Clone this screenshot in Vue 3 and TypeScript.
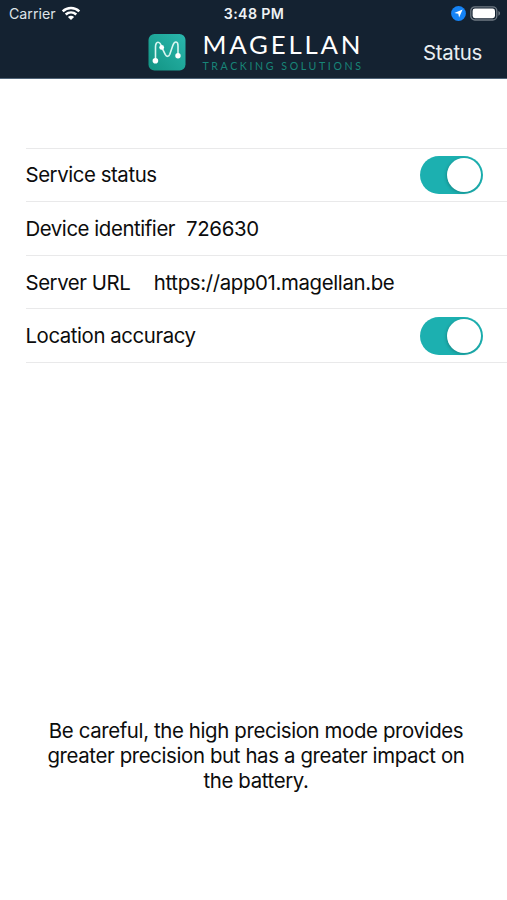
<script setup lang="ts">
interface Row {
  id: string
  label: string
  value?: string
  toggle?: boolean
}

const rows: Row[] = [
  { id: 'service', label: 'Service status', toggle: true },
  { id: 'device', label: 'Device identifier', value: '726630' },
  { id: 'server', label: 'Server URL', value: 'https://app01.magellan.be' },
  { id: 'accuracy', label: 'Location accuracy', toggle: true },
]
const notice: string[] = [
  'Be careful, the high precision mode provides',
  'greater precision but has a greater impact on',
  'the battery.',
]
</script>

<template>
  <div class="screen">
    <header class="top">
      <div class="statusbar">
        <div class="carrier">
          <span>Carrier</span>
          <svg class="wifi" width="20" height="15" viewBox="0 0 20 15">
            <path d="M1.7 5.3C6.4 .9 13.6 .9 18.3 5.3" />
            <path d="M4.7 8.5C7.8 5.7 12.2 5.7 15.3 8.5" />
            <path class="dot" d="M10 14L6.9 10.9C8.7 9.3 11.3 9.3 13.1 10.9Z" />
          </svg>
        </div>
        <div class="time">3:48 PM</div>
        <div class="indicators">
          <svg width="15" height="15" viewBox="0 0 15 15">
            <circle cx="7.5" cy="7.5" r="7.4" fill="#1583f5" />
            <path d="M11.6 3.4L8.1 11.6L7.3 7.7L3.4 6.9Z" fill="#fff" />
          </svg>
          <svg width="31" height="15" viewBox="0 0 31 15">
            <rect x=".8" y=".8" width="26" height="13.2" rx="4" fill="none" stroke="#6f7983" stroke-width="1.3" />
            <rect x="2.6" y="2.6" width="22.4" height="9.6" rx="2.4" fill="#fff" />
            <path d="M28.4 5.1C30.6 6 30.6 8.8 28.4 9.7Z" fill="#6f7983" />
          </svg>
        </div>
      </div>
      <div class="navbar">
        <div class="brand">
          <svg class="mark" width="38" height="37" viewBox="0 0 38 37">
            <defs>
              <linearGradient id="markFill" x1="0" y1="1" x2="1" y2="0">
                <stop offset="0" stop-color="#129483" />
                <stop offset="1" stop-color="#2ab7ad" />
              </linearGradient>
            </defs>
            <rect x=".5" y="0" width="37" height="36.5" rx="6" fill="url(#markFill)" />
            <path
              d="M7.5 26.7V13C7.5 6.8 12 6.6 13.8 13.4L17.2 20.4C18.6 23 20.6 23 21.8 20.2L24.8 11.5C26.6 6.6 30 7 30 12V22"
              fill="none" stroke="#d9f6f1" stroke-width="1.6" stroke-linecap="round" />
            <circle cx="7.4" cy="26.8" r="2.8" fill="#fff" />
            <circle cx="13.7" cy="13.4" r="2.4" fill="#fff" />
            <circle cx="30" cy="21.8" r="2.7" fill="#fff" />
          </svg>
          <div class="wordmark">
            <span class="name">MAGELLAN</span>
            <span class="tag">TRACKING SOLUTIONS</span>
          </div>
        </div>
        <a class="action">Status</a>
      </div>
    </header>

    <main class="list">
      <div v-for="row in rows" :key="row.id" class="row" :class="row.id">
        <span class="label">{{ row.label }}</span>
        <span v-if="row.value" class="value">{{ row.value }}</span>
        <span v-if="row.toggle" class="switch"><span class="knob"></span></span>
      </div>
    </main>

    <footer class="notice">
      <p v-for="(line, i) in notice" :key="i">{{ line }}</p>
    </footer>
  </div>
</template>

<style>
body {
  background: #fff;
}
</style>

<style scoped>
.screen {
  width: 507px;
  height: 900px;
  display: flex;
  flex-direction: column;
  overflow: hidden;
  background: #fff;
  color: #0c0c0c;
  font-family: Inter, "Liberation Sans", sans-serif;
  font-size: 20.4px;
}
.top {
  height: 79px;
  box-sizing: border-box;
  border-bottom: 1px solid #4f6376;
  background: #142231;
  color: #fff;
}
.statusbar {
  height: 27px;
  padding: 0 6px 0 9px;
  display: grid;
  grid-template-columns: 1fr auto 1fr;
  align-items: center;
  font-size: 14.2px;
}
.carrier {
  display: flex;
  align-items: center;
  gap: 5px;
  color: #dfe4e8;
}
.wifi {
  fill: none;
  stroke: #fff;
  stroke-width: 2.5;
}
.wifi .dot {
  fill: #fff;
  stroke: none;
}
.time {
  margin-right: 2px;
  font-weight: 600;
  letter-spacing: 0.35px;
  color: #eef1f4;
}
.indicators {
  display: flex;
  justify-content: flex-end;
  align-items: center;
  gap: 4px;
}
.navbar {
  height: 51px;
  padding: 0 25px 0 148px;
  display: flex;
  justify-content: space-between;
  align-items: center;
}
.brand {
  display: flex;
  align-items: center;
  gap: 16.5px;
}
.wordmark {
  padding-bottom: 4px;
  display: flex;
  flex-direction: column;
  font-family: Lato, sans-serif;
  white-space: nowrap;
}
.name {
  font-size: 25.8px;
  line-height: 31px;
  letter-spacing: 2.8px;
}
.tag {
  font-size: 10.6px;
  line-height: 12px;
  letter-spacing: 2.6px;
  color: #188578;
}
.action {
  color: #e9eef2;
  letter-spacing: -0.3px;
}
.list {
  margin-top: 68.6px;
  margin-left: 26px;
  border-top: 1px solid #e9e9ea;
}
.row {
  height: 53.6px;
  box-sizing: border-box;
  padding-right: 24px;
  display: flex;
  align-items: center;
  border-bottom: 1px solid #e9e9ea;
  white-space: nowrap;
  letter-spacing: -0.43px;
}
.label {
  margin-left: -0.5px;
}
.value {
  letter-spacing: -0.36px;
}
.device .value {
  margin-left: 11px;
}
.server .value {
  margin-left: 23.5px;
}
.switch {
  width: 63px;
  height: 38px;
  margin-left: auto;
  box-sizing: border-box;
  padding: 2px;
  display: flex;
  justify-content: flex-end;
  border-radius: 19px;
  background: #1cb0b0;
}
.knob {
  width: 34px;
  height: 34px;
  border-radius: 50%;
  background: #fff;
  box-shadow: -1px 1px 3px rgba(0, 40, 40, 0.25);
}
.notice {
  margin-top: 356px;
  padding-left: 5px;
  text-align: center;
  line-height: 24.8px;
  letter-spacing: -0.37px;
}
.notice p {
  margin: 0;
  white-space: nowrap;
}
</style>
